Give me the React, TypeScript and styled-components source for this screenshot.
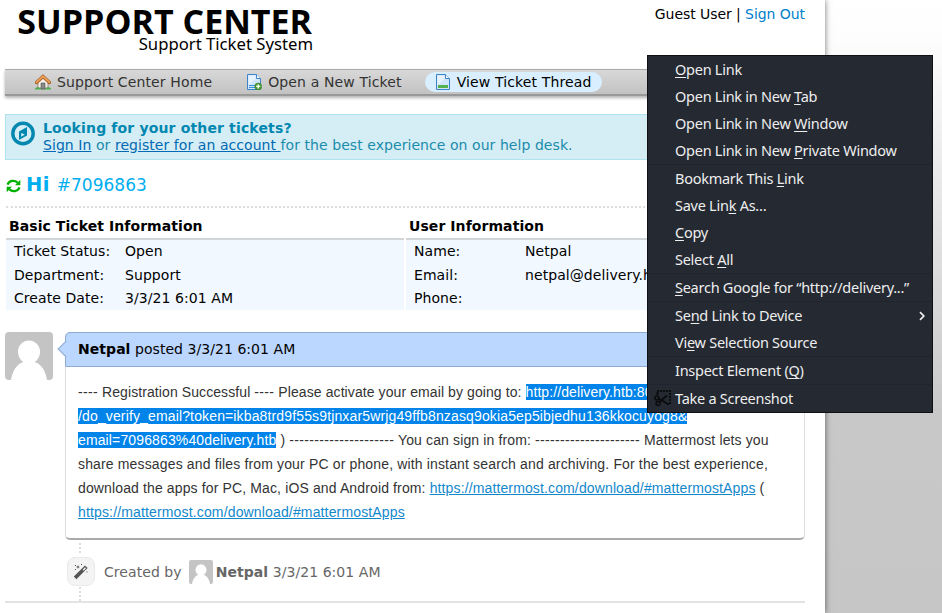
import React from "react";
import styled, { createGlobalStyle } from "styled-components";

const Global = createGlobalStyle`
  * { box-sizing: border-box; }
  body { margin: 0; overflow: hidden; font: 14px/20px "DejaVu Sans", sans-serif; color: #000; }
`;

const Desktop = styled.div`
  position: relative;
  width: 942px;
  height: 613px;
  overflow: hidden;
  background: linear-gradient(#fff 0, #fdfdfd 40px, #c8c8c8 412px, #c6c6c6 613px);
`;
const Page = styled.main`
  width: 825px;
  height: 613px;
  padding: 0 20px 0 5px;
  background: #fff;
  box-shadow: 0 0 6px rgba(0, 0, 0, 0.55);
  display: flow-root;
`;
const Header = styled.header`
  height: 69px;
  display: flex;
  justify-content: space-between;
`;
const Logo = styled.div`
  width: 308px;
  padding-top: 6px;
  text-align: right;
  font-family: "Open Sans", sans-serif;
`;
const LogoTitle = styled.div`
  font-size: 34px;
  font-weight: 700;
  line-height: 30px;
  margin-right: 1px;
  white-space: nowrap;
`;
const LogoTagline = styled.div`
  font-size: 16.7px;
  line-height: 16px;
  font-family: "Noto Sans", sans-serif;
`;
const UserLine = styled.div`
  padding-top: 4px;
  letter-spacing: -0.06px;
  a { color: #0080cc; }
`;
const Nav = styled.nav`
  height: 27px;
  display: flex;
  align-items: center;
  padding-left: 20px;
  letter-spacing: 0.13px;
  background: linear-gradient(#d8d8d8, #c2c2c2);
  border-top: 1px solid #aaa;
  border-bottom: 2px solid #999;
  box-shadow: 0 2px 3px rgba(0, 0, 0, 0.3);
`;
const NavItem = styled.a<{ $active?: boolean; $gap: number }>`
  height: 20px;
  display: flex;
  align-items: center;
  gap: 6px;
  padding: 0 10px;
  margin-right: ${(p) => p.$gap}px;
  border-radius: 10px;
  white-space: nowrap;
  background: ${(p) => (p.$active ? "#d9efff" : "transparent")};
  color: ${(p) => (p.$active ? "#000" : "#333")};
`;
const Notice = styled.section`
  height: 46px;
  margin-top: 18px;
  padding: 5px 5px 4px;
  display: flex;
  gap: 7px;
  background: #d5edf5;
  border: 1px solid #afe4ee;
  color: #1a8cac;
  line-height: 17px;
  letter-spacing: 0.06px;
  svg { margin-top: 1px; }
  strong { display: block; color: #0288b0; letter-spacing: 0.15px; }
  a { color: #0069b3; text-decoration: underline; }
`;
const Title = styled.h1`
  margin: 14px 0 0 1px;
  height: 34px;
  display: flex;
  align-items: center;
  font-size: 17px;
  font-weight: 400;
  line-height: 22px;
  color: #00aeef;
  border-bottom: 2px dotted #ddd;
  padding-bottom: 10px;
  svg { margin-top: 1px; }
  strong { font-size: 19.5px; margin: 0 7px 0 5px; letter-spacing: 0.4px; }
`;
const InfoGrid = styled.section`
  display: grid;
  grid-template-columns: 398px 398px;
  gap: 2px;
  margin: 8px 0 0 1px;
  letter-spacing: 0.07px;
`;
const InfoTitle = styled.h2`
  margin: 0;
  padding: 0 3px;
  height: 24px;
  font-size: 14px;
  line-height: 20px;
  border-bottom: 2px solid #d3d6d8;
`;
const InfoBody = styled.dl<{ $label: number }>`
  margin: 0;
  height: 70px;
  padding: 0 8px;
  background: #f1f8ff;
  display: grid;
  grid-template-columns: ${(p) => p.$label}px 1fr;
  grid-auto-rows: 23.6px;
  line-height: 23px;
  white-space: nowrap;
  dt, dd { margin: 0; }
`;
const Thread = styled.section`
  display: flex;
  gap: 12px;
  margin-top: 22px;
`;
const Entry = styled.article`
  position: relative;
  width: 740px;
  height: 208px;
  border: 1px solid #ddd;
  border-bottom: 2px solid #aaa;
  border-radius: 5px;
`;
const EntryHead = styled.header`
  height: 35px;
  margin: -1px -1px 0;
  padding: 0 12px;
  line-height: 33px;
  letter-spacing: 0.05px;
  background: #bcd7ff;
  border: 1px solid #8fabd2;
  border-radius: 5px 5px 0 0;
  &::before {
    content: "";
    position: absolute;
    left: -6px;
    top: 10px;
    width: 11px;
    height: 11px;
    background: #bcd7ff;
    border: solid #8fabd2;
    border-width: 0 0 1px 1px;
    transform: rotate(45deg);
  }
`;
const EntryText = styled.div`
  padding: 13px 12px;
  font: 14px/24px "Liberation Sans", sans-serif;
  color: #333;
  white-space: nowrap;
  a { color: #1288cc; text-decoration: underline; }
`;
const TextLine = styled.div<{ $track: number }>`
  letter-spacing: ${(p) => p.$track}px;
`;
const Dashes = styled.span`
  letter-spacing: 0.34px;
`;
const Selected = styled.mark`
  background: #0084ea;
  color: #fff;
`;
const Connector = styled.div<{ $h: number; $top: number }>`
  width: 2px;
  height: ${(p) => p.$h}px;
  margin: ${(p) => p.$top}px 0 0 74px;
  border-left: 2px dotted #ddd;
`;
const EventRow = styled.div`
  display: flex;
  align-items: center;
  height: 29px;
  margin: 4px 0 0 62px;
  color: #666;
  letter-spacing: 0.06px;
  svg.face { margin: 1px 3px 0 7px; }
`;
const EventIcon = styled.span`
  width: 28px;
  height: 29px;
  margin-right: 9px;
  border: 1px solid #e9e9e9;
  border-radius: 8px;
  background: #f4f4f4;
  display: grid;
  place-items: center;
`;
const Rule = styled.hr`
  margin: 0;
  border: 0;
  height: 2px;
  background: #e3e3e3;
`;
const Menu = styled.ul`
  position: absolute;
  left: 647px;
  top: 55px;
  width: 286px;
  height: 358px;
  margin: 0;
  padding: 0;
  list-style: none;
  border: 1px solid #0e1015;
  background: #252932;
  color: #eee;
  font: 14.5px/27px "Noto Sans", sans-serif;
  letter-spacing: -0.26px;
`;
const MenuItem = styled.li<{ $divided?: boolean }>`
  height: ${(p) => (p.$divided ? 28 : 27)}px;
  border-top: ${(p) => (p.$divided ? "1px solid #20242c" : "0")};
  padding-right: 6px;
  display: flex;
  align-items: center;
  white-space: pre;
  u { text-underline-offset: 2px; text-decoration-thickness: 1px; }
`;
const MenuIcon = styled.span`
  width: 27px;
  flex: none;
  padding-left: 6px;
  display: flex;
`;
const MenuLabel = styled.span`
  flex: 1;
`;

const HomeIcon = () => (
  <svg width="16" height="16" viewBox="0 0 16 16">
    <path d="M3 8v6h10V8L8 3z" fill="#f4efe8" stroke="#a08b78" />
    <path d="M0 14.5q3-3 5 0h6q2-3 5 0v1H0z" fill="#4cae4c" />
    <path d="M6 9h4v6H6z" fill="#888" stroke="#555" strokeWidth=".6" />
    <path d="M1.500 8.500l6.500-6 6.500 6" fill="none" stroke="#a65f20" strokeWidth="3.2" strokeLinecap="round" />
    <path d="M1.600 8.200l6.400-5.800 6.400 5.800" fill="none" stroke="#f0a35c" strokeWidth="1.7" strokeLinecap="round" />
  </svg>
);
const DocIcon = ({ add }: { add?: boolean }) => (
  <svg width="16" height="16" viewBox="0 0 16 16">
    <path d="M1.5.5h9l4 4v11h-13z" fill="#cfe5fa" stroke="#3c84c6" />
    <path d="M2.5 1.5h7v3l-7 7z" fill="#e6f3ff" />
    <path d="M10.5.5v4h4" fill="#fff" stroke="#3c84c6" />
    {add ? (
      <g>
        <path d="M3 11.5h6M3 13.5h6" stroke="#3690de" />
        <circle cx="12.2" cy="12.400" r="3.5" fill="#4a9b36" stroke="#2f7d22" strokeWidth=".5" />
        <path d="M10.200 12.400h4M12.200 10.400v4" stroke="#fff" strokeWidth="1.4" />
      </g>
    ) : (
      <path d="M3 11h10v3H3z" fill="#56b04c" />
    )}
  </svg>
);
const CompassIcon = () => (
  <svg width="25" height="25" viewBox="0 0 25 25">
    <circle cx="12" cy="12.5" r="10.2" fill="none" stroke="#0288b0" strokeWidth="3.4" />
    <path fillRule="evenodd" d="M16 6v8.500l-8 4.500v-8.500zM10.200 12v3.800l3.600-2.200z" fill="#0288b0" />
  </svg>
);
const RefreshIcon = () => (
  <svg width="15" height="14" viewBox="0 0 15 14" fill="none" stroke="#00b000" strokeWidth="2.3">
    <path d="M1.6 5.6C3 1.5 8.5.6 11.5 3.6M13.4 8.4C12 12.5 6.500 13.400 3.500 10.400" />
    <path d="M14.300.8v5.400H9zM.7 13.200V7.800H6z" fill="#00b000" stroke="none" />
  </svg>
);
const Face = ({ size, id }: { size: number; id: string }) => (
  <svg className="face" width={size} height={size} viewBox="0 0 48 48">
    <clipPath id={id}><rect width="48" height="48" rx="4" /></clipPath>
    <g clipPath={`url(#${id})`}>
      <path d="M0 0h48v48H0z" fill="#c4c4c4" />
      <ellipse cx="24" cy="20" rx="11" ry="11.500" fill="#fff" />
      <path d="M6 48C8 35 15 29 24 29s16 6 18 19z" fill="#fff" />
    </g>
  </svg>
);
const WandIcon = () => (
  <svg width="16" height="16" viewBox="0 0 16 16" fill="#555">
    <path fillRule="evenodd" d="M.8 12.600L12 1.400 14.600 4 3.400 15.200zM9.700 5.700l1 1L13 4.200l-1-1z" />
    <path d="M5 1l.6 1.400L7 3l-1.400.6L5 5l-.6-1.400L3 3l1.400-.6zM2 1h1v1H2zM8 0h1v1H8zM2 5h1v1H2zM13.500 7.500h1v1h-1z" />
  </svg>
);
const ScissorsIcon = () => (
  <svg width="17" height="17" viewBox="0 0 17 17" fill="none" stroke="#0a0b0d">
    <path d="M3 1h13v13h-3" strokeWidth="2" strokeDasharray="2 1" />
    <path d="M3.500 2v3" strokeWidth="2" />
    <circle cx="2.800" cy="8" r="1.900" strokeWidth="1.500" />
    <circle cx="4" cy="13.500" r="1.900" strokeWidth="1.500" />
    <path d="M4.500 8.500l8.500 5M5.200 12L13 5.500" strokeWidth="2" />
  </svg>
);
const ArrowIcon = () => (
  <svg width="8" height="10" viewBox="0 0 8 10">
    <path d="M2 1.200L5.800 5 2 8.800" fill="none" stroke="#eee" strokeWidth="1.700" />
  </svg>
);

type Item = { label: React.ReactNode; divided?: boolean; arrow?: boolean; icon?: boolean };
const items: Item[] = [
  { label: <><u>O</u>pen Link</> },
  { label: <>Open Link in New <u>T</u>ab</> },
  { label: <>Open Link in New <u>W</u>indow</> },
  { label: <>Open Link in New <u>P</u>rivate Window</> },
  { label: <>Bookmark This <u>L</u>ink</>, divided: true },
  { label: <>Save Lin<u>k</u> As…</> },
  { label: <><u>C</u>opy</> },
  { label: <>Select <u>A</u>ll</> },
  { label: <><u>S</u>earch Google for “http://delivery...”</>, divided: true },
  { label: <>Se<u>n</u>d Link to Device</>, divided: true, arrow: true },
  { label: <>Vi<u>e</u>w Selection Source</> },
  { label: <>Inspect Element (<u>Q</u>)</>, divided: true },
  { label: <>Take a Screenshot</>, divided: true, icon: true },
];

export default function App() {
  return (
    <Desktop>
      <Global />
      <Page>
        <Header>
          <Logo>
            <LogoTitle>SUPPORT CENTER</LogoTitle>
            <LogoTagline>Support Ticket System</LogoTagline>
          </Logo>
          <UserLine>Guest User | <a>Sign Out</a></UserLine>
        </Header>
        <Nav>
          <NavItem $gap={14}><HomeIcon />Support Center Home</NavItem>
          <NavItem $gap={13}><DocIcon add />Open a New Ticket</NavItem>
          <NavItem $gap={0} $active><DocIcon />View Ticket Thread</NavItem>
        </Nav>
        <Notice>
          <CompassIcon />
          <div>
            <strong>Looking for your other tickets?</strong>
            <a>Sign In</a> or <a>register for an account </a>for the best experience on our help desk.
          </div>
        </Notice>
        <Title><RefreshIcon /><strong>Hi</strong> #7096863</Title>
        <InfoGrid>
          <div>
            <InfoTitle>Basic Ticket Information</InfoTitle>
            <InfoBody $label={111}>
              <dt>Ticket Status:</dt><dd>Open</dd>
              <dt>Department:</dt><dd>Support</dd>
              <dt>Create Date:</dt><dd>3/3/21 6:01 AM</dd>
            </InfoBody>
          </div>
          <div>
            <InfoTitle>User Information</InfoTitle>
            <InfoBody $label={111}>
              <dt>Name:</dt><dd>Netpal</dd>
              <dt>Email:</dt><dd>netpal@delivery.htb</dd>
              <dt>Phone:</dt><dd />
            </InfoBody>
          </div>
        </InfoGrid>
        <Thread>
          <Face size={48} id="face-large" />
          <Entry>
            <EntryHead><b>Netpal</b> posted 3/3/21 6:01 AM</EntryHead>
            <EntryText>
              <TextLine $track={0.09}>
                <Dashes>----</Dashes> Registration Successful <Dashes>----</Dashes> Please activate your email by going to: <Selected>http://delivery.htb:8065</Selected>
              </TextLine>
              <TextLine $track={0.14}>
                <Selected>/do_verify_email?token=ikba8trd9f55s9tjnxar5wrjg49ffb8nzasq9okia5ep5ibjedhu136kkocuyog8&amp;</Selected>
              </TextLine>
              <TextLine $track={0.13}>
                <Selected>email=7096863%40delivery.htb</Selected> ) <Dashes>---------------------</Dashes> You can sign in from: <Dashes>---------------------</Dashes> Mattermost lets you
              </TextLine>
              <TextLine $track={0.15}>
                share messages and files from your PC or phone, with instant search and archiving. For the best experience,
              </TextLine>
              <TextLine $track={0.13}>
                download the apps for PC, Mac, iOS and Android from: <a>https://mattermost.com/download/#mattermostApps</a> (
              </TextLine>
              <TextLine $track={0.15}>
                <a>https://mattermost.com/download/#mattermostApps</a>
              </TextLine>
            </EntryText>
          </Entry>
        </Thread>
        <Connector $h={10} $top={3} />
        <EventRow>
          <EventIcon><WandIcon /></EventIcon>
          <span>Created by</span>
          <Face size={24} id="face-small" />
          <span><b>Netpal</b> 3/3/21 6:01 AM</span>
        </EventRow>
        <Connector $h={14} $top={1} />
        <Rule />
      </Page>
      <Menu>
        {items.map((item, i) => (
          <MenuItem key={i} $divided={item.divided}>
            <MenuIcon>{item.icon && <ScissorsIcon />}</MenuIcon>
            <MenuLabel>{item.label}</MenuLabel>
            {item.arrow && <ArrowIcon />}
          </MenuItem>
        ))}
      </Menu>
    </Desktop>
  );
}
